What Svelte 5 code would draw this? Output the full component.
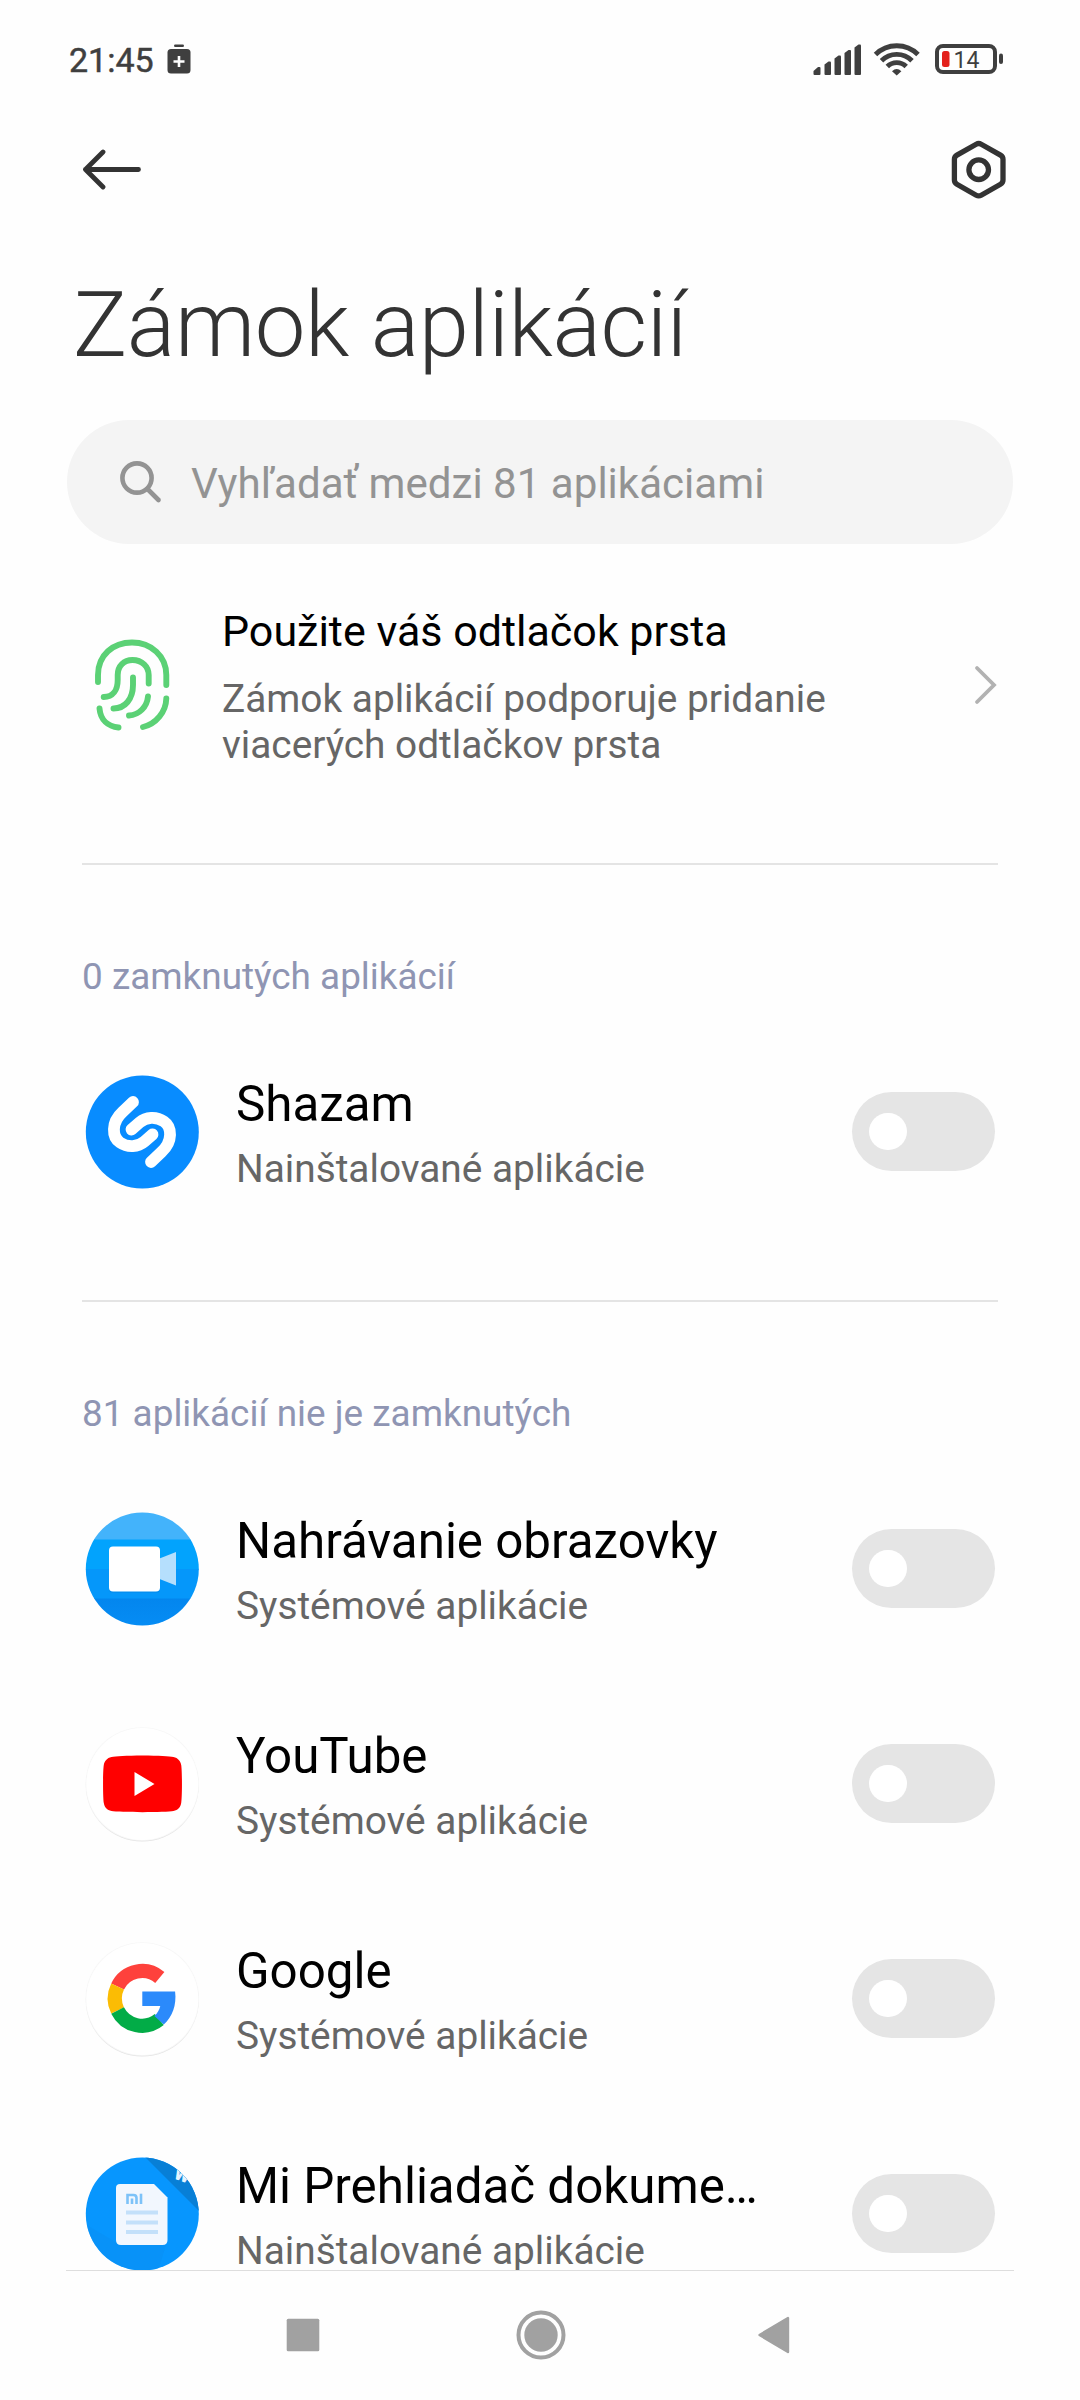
<script lang="ts">
  type App = {
    id: string;
    name: string;
    kind: string;
    locked: boolean;
  };

  type Section = {
    label: string;
    apps: App[];
  };

  let sections = $state<Section[]>([
    {
      label: "0 zamknutých aplikácií",
      apps: [{ id: "shazam", name: "Shazam", kind: "Nainštalované aplikácie", locked: false }]
    },
    {
      label: "81 aplikácií nie je zamknutých",
      apps: [
        { id: "recorder", name: "Nahrávanie obrazovky", kind: "Systémové aplikácie", locked: false },
        { id: "youtube", name: "YouTube", kind: "Systémové aplikácie", locked: false },
        { id: "google", name: "Google", kind: "Systémové aplikácie", locked: false },
        { id: "docs", name: "Mi Prehliadač dokume…", kind: "Nainštalované aplikácie", locked: false }
      ]
    }
  ]);
</script>

{#snippet appIcon(id: string)}
  <svg class="app-icon" viewBox="0 0 120 120" aria-hidden="true">
    {#if id === "shazam"}
      <circle cx="60.3" cy="60" r="56.5" fill="#088cff" />
      <g fill="none" stroke="#fff" stroke-width="11.8" stroke-linecap="round">
        <path d="M51 30 L40.500 40 C29 50.500 30 65 38 70.500 C46 76 56 75 62.500 69.500 L70.500 62.500" />
        <path d="M69 90 L79.500 80 C91 69.500 90 55 82 49.500 C74 44 64 45 57.500 50.500 L49.500 57.500" />
      </g>
    {:else if id === "recorder"}
      <defs>
        <clipPath id="rec-clip"><circle cx="60.3" cy="60" r="56.5" /></clipPath>
        <linearGradient id="rec-low" x1="0" y1="0" x2="0" y2="1">
          <stop offset="0" stop-color="#0386ee" />
          <stop offset="1" stop-color="#068df5" />
        </linearGradient>
      </defs>
      <g clip-path="url(#rec-clip)">
        <rect width="120" height="31" fill="#43b3fb" />
        <rect y="30.500" width="120" height="30" fill="#02a3fd" />
        <rect y="60" width="120" height="30" fill="#0597fa" />
        <rect y="89.500" width="120" height="31" fill="url(#rec-low)" />
      </g>
      <rect x="27" y="39" width="51" height="45" rx="4" fill="#0374d4" opacity="0.25" />
      <path d="M77.500 49.500 L94 43 V76.500 L77.500 70 Z" fill="#b5dffd" />
      <rect x="27" y="37.500" width="51" height="45" rx="4" fill="#fff" />
    {:else if id === "youtube"}
      <circle cx="60.3" cy="61" r="56.5" fill="#e4e4e4" />
      <circle cx="60.3" cy="60" r="56.8" fill="#f7f7f7" />
      <circle cx="60.3" cy="60" r="56" fill="#fff" />
      <path
        d="M60.500 31.500 C76.500 31.500 87.500 32.300 91.500 33 C96 34 98.500 37 99.200 41 C100.200 47 100.200 73 99.200 79 C98.500 83.500 96 86 91.500 87 C84.500 88.500 36.500 88.500 29.500 87 C25 86 22.500 83.500 21.800 79 C20.800 73 20.800 47 21.800 41 C22.500 37 25 34 29.500 33 C33.500 32.300 44.500 31.500 60.500 31.500 Z"
        fill="#f00"
      />
      <path d="M52.500 48 L72.500 60 L52.500 72 Z" fill="#fff" />
    {:else if id === "google"}
      <circle cx="60.3" cy="61" r="56.5" fill="#e4e4e4" />
      <circle cx="60.3" cy="60" r="56.8" fill="#f7f7f7" />
      <circle cx="60.3" cy="60" r="56" fill="#fff" />
      <g fill="none" stroke-width="14.200">
        <path d="M77.800 38.500 A27.300 27.300 0 0 0 35.600 47.500" stroke="#fe413c" />
        <path d="M35.600 47.500 A27.300 27.300 0 0 0 35.600 71.500" stroke="#fbbc04" />
        <path d="M35.600 71.500 A27.300 27.300 0 0 0 77.300 80.600" stroke="#02ac47" />
      </g>
      <path d="M60.300 52.500 H93.100 C94.800 66 90.300 78 81.800 85.500 L72.300 77 C75.300 74.500 77.300 71 78.300 67 H60.300 Z" fill="#2b8afb" />
    {:else}
      <defs>
        <clipPath id="doc-clip"><circle cx="60.3" cy="60" r="56.5" /></clipPath>
      </defs>
      <g clip-path="url(#doc-clip)">
        <rect width="120" height="120" fill="#0796fe" />
        <path d="M33.500 88 L3 70 V120 H75 L84 91 Z" fill="#0a8ff3" opacity="0.6" />
        <path d="M60 0 L120 60 V0 Z" fill="#087fd6" />
        <text class="wps" x="91" y="25" transform="rotate(20 93 25)">W</text>
      </g>
      <path d="M38 30 H72 L85.500 43.500 V86 Q85.500 91 80.500 91 H39 Q34 91 34 86 V34 Q34 30 38 30 Z" fill="#f2f7fe" />
      <g fill="none" stroke="#7dc2f8" stroke-width="2.600">
        <path d="M45.500 50 V41 H51.500 Q54.500 41 54.500 44 V50" />
        <path d="M50 44.500 V50" />
        <path d="M59 39.700 V50" />
      </g>
      <path d="M44 58.500 H76 M44 68.500 H76 M44 78 H76" stroke="#c3e0fa" stroke-width="3.800" />
    {/if}
  </svg>
{/snippet}

<div class="screen">
  <div class="status-bar">
    <span class="clock">21:45</span>
    <svg class="saver" width="24" height="30" viewBox="0 0 24 30" aria-hidden="true">
      <rect x="7" y="0.500" width="10" height="2.600" rx="1.300" fill="#3f3f3f" />
      <rect x="0.500" y="5" width="23" height="24.500" rx="3.500" fill="#3f3f3f" />
      <path d="M12 12 V23 M6.500 17.500 H17.500" stroke="#fff" stroke-width="2.600" />
    </svg>
    <svg class="indicators" width="192" height="36" viewBox="812 41 192 36" aria-hidden="true">
      <g fill="#3f3f3f">
        <path d="M813.500 71 L818 67 H819.500 Q820.500 67 820.500 68 V74 Q820.500 75 819.500 75 H814.500 Q813.500 75 813.500 74 Z" />
        <path d="M824.500 64.500 L828.500 61.500 H830 Q831 61.500 831 62.500 V74 Q831 75 830 75 H825.500 Q824.500 75 824.500 74 Z" />
        <path d="M834.500 58.500 L838.500 55.500 H840 Q841 55.500 841 56.500 V74 Q841 75 840 75 H835.500 Q834.500 75 834.500 74 Z" />
        <path d="M844.500 53 L848.500 50 H850 Q851 50 851 51 V74 Q851 75 850 75 H845.500 Q844.500 75 844.500 74 Z" />
        <path d="M854.500 47.500 L858.500 44.500 H860 Q861 44.500 861 45.500 V74 Q861 75 860 75 H855.500 Q854.500 75 854.500 74 Z" />
        <path d="M896.700 75.500 L892 71.300 Q896.700 66.500 901.400 71.300 Z" />
      </g>
      <g fill="none" stroke="#3f3f3f" stroke-width="4.900">
        <path d="M875.500 54.500 A30 30 0 0 1 918 54.500" />
        <path d="M881.500 60.700 A21.500 21.500 0 0 1 912 60.700" />
        <path d="M887.300 66.500 A13.500 13.500 0 0 1 906.200 66.500" />
      </g>
      <rect x="937" y="46" width="58" height="26" rx="6" fill="none" stroke="#3f3f3f" stroke-width="4" />
      <rect x="999" y="53.500" width="4" height="10.500" rx="2" fill="#3f3f3f" />
      <rect x="942" y="51" width="7.500" height="16" rx="2.500" fill="#e3211c" />
      <text class="charge" x="953.500" y="68">14</text>
    </svg>
  </div>

  <div class="toolbar">
    <button type="button" aria-label="Späť">
      <svg width="60" height="42" viewBox="82 149 60 42" aria-hidden="true">
        <path
          d="M103 152 L85.500 169.500 L103 187 M85.500 169.500 H138.500"
          fill="none"
          stroke="#333"
          stroke-width="4.800"
          stroke-linecap="round"
          stroke-linejoin="round"
        />
      </svg>
    </button>
    <button type="button" aria-label="Nastavenia">
      <svg width="56" height="60" viewBox="951 140 56 60" aria-hidden="true">
        <g fill="none" stroke="#333" stroke-width="5.300">
          <path
            d="M976.200 144.200 Q978.700 142.800 981.200 144.200 L1000.500 155.100 Q1003 156.500 1003 159.300 V180.100 Q1003 182.900 1000.500 184.300 L981.200 195.200 Q978.700 196.600 976.200 195.200 L956.900 184.300 Q954.400 182.900 954.400 180.100 V159.300 Q954.400 156.500 956.900 155.100 Z"
          />
          <circle cx="978.700" cy="169.700" r="9.800" />
        </g>
      </svg>
    </button>
  </div>

  <h1>Zámok aplikácií</h1>

  <div class="search">
    <svg width="42" height="44" viewBox="120 460 42 44" aria-hidden="true">
      <g fill="none" stroke="#939393" stroke-width="4.600">
        <circle cx="137" cy="478" r="14.600" />
        <path d="M147.500 489 L158.500 500" stroke-linecap="round" />
      </g>
    </svg>
    <span>Vyhľadať medzi 81 aplikáciami</span>
  </div>

  <main>
    <div class="fingerprint">
      <svg class="print" width="80" height="96" viewBox="92 636 80 96" aria-hidden="true">
        <g fill="none" stroke="#5bd175" stroke-width="5.900" stroke-linecap="round">
          <path d="M98 682 V675 C98 655 113 642.500 132 642.500 C151 642.500 166.300 656 166.300 675 V685" />
          <path d="M103.700 697 C113 697 117.700 690 117.700 680 V675 C117.700 666 124 660 132.500 660 C142 660 148.700 666.500 148.700 675 V683.500" />
          <path d="M133 677.500 V685 C133 699 125 708.500 113.500 708.500" />
          <path d="M148 696.500 C147 707 139 715 129 715.500" />
          <path d="M99.500 708.500 C100.500 720 108 726.500 118.500 727.500" />
          <path d="M166.300 698.500 C166 712 156 724 143 727" />
        </g>
      </svg>
      <div class="fingerprint-copy">
        <div class="fingerprint-title">Použite váš odtlačok prsta</div>
        <div class="fingerprint-text">Zámok aplikácií podporuje pridanie viacerých odtlačkov prsta</div>
      </div>
      <svg class="chevron" width="24" height="42" viewBox="0 0 24 42" aria-hidden="true">
        <path d="M3 4 L20 21 L3 38" fill="none" stroke="#b2b2b2" stroke-width="3.800" stroke-linecap="round" />
      </svg>
    </div>

    {#each sections as section}
      <section>
        <h2>{section.label}</h2>
        {#each section.apps as app (app.id)}
          <div class="app-row">
            {@render appIcon(app.id)}
            <div class="app-copy">
              <div class="app-name">{app.name}</div>
              <div class="app-kind">{app.kind}</div>
            </div>
            <button
              class="toggle"
              class:on={app.locked}
              type="button"
              role="switch"
              aria-checked={app.locked}
              aria-label={app.name}
              onclick={() => (app.locked = !app.locked)}
            >
              <span class="knob"></span>
            </button>
          </div>
        {/each}
      </section>
    {/each}
  </main>

  <nav>
    <svg width="34" height="34" viewBox="0 0 34 34" aria-hidden="true">
      <rect x="0.700" y="0.700" width="32.600" height="32.600" rx="1.500" fill="#a1a1a1" />
    </svg>
    <svg class="home" width="50" height="50" viewBox="0 0 50 50" aria-hidden="true">
      <circle cx="25" cy="25" r="22.500" fill="none" stroke="#a1a1a1" stroke-width="4" />
      <circle cx="25" cy="25" r="16.700" fill="#a1a1a1" />
    </svg>
    <svg width="34" height="40" viewBox="0 0 34 40" aria-hidden="true">
      <path d="M2.500 20 L31 3 V37 Z" fill="#a1a1a1" stroke="#a1a1a1" stroke-width="2.400" stroke-linejoin="round" />
    </svg>
  </nav>
</div>

<style>
  :global(body) {
    background: #fefefe;
  }

  .screen {
    box-sizing: border-box;
    width: 1080px;
    height: 2400px;
    display: flex;
    flex-direction: column;
    overflow: hidden;
    background: #fefefe;
    color: #000;
    font-family: Roboto, "Noto Sans", sans-serif;
  }

  .screen svg {
    display: block;
    flex: none;
  }

  button {
    padding: 0;
    border: 0;
    background: none;
    cursor: pointer;
  }

  .status-bar {
    height: 118px;
    display: flex;
    align-items: center;
    padding: 0 76px 0 69px;
    flex: none;
  }

  .clock {
    width: 86px;
    font-size: 34px;
    font-weight: 450;
    line-height: 40px;
    color: #3f3f3f;
    padding-top: 2px;
    -webkit-text-stroke: 0.5px #3f3f3f;
  }

  .saver {
    margin-left: 12px;
  }

  .indicators {
    margin-left: auto;
  }

  .charge {
    font-size: 23px;
    fill: #3f3f3f;
  }

  .toolbar {
    height: 104px;
    display: flex;
    align-items: center;
    justify-content: space-between;
    padding: 0 73px 0 82px;
    flex: none;
  }

  h1 {
    margin: 43px 0 0 73px;
    font-size: 90.5px;
    font-weight: 300;
    line-height: 120px;
    letter-spacing: -0.4px;
    color: #333;
    flex: none;
  }

  .search {
    box-sizing: border-box;
    height: 124px;
    margin: 35px 67px 0;
    padding: 0 53px;
    display: flex;
    align-items: center;
    gap: 29px;
    border-radius: 62px;
    background: #f4f4f4;
    font-size: 42.1px;
    color: #939393;
    flex: none;
  }

  .search span {
    padding-top: 2px;
  }

  main {
    flex: 1;
    min-height: 0;
    overflow: hidden;
    padding: 0 82px;
  }

  .fingerprint {
    height: 319px;
    display: flex;
    align-items: flex-start;
  }

  .print {
    margin: 92px 0 0 10px;
  }

  .fingerprint-copy {
    width: 640px;
    margin: 59px 0 0 50px;
  }

  .fingerprint-title {
    font-size: 43px;
    line-height: 56px;
  }

  .fingerprint-text {
    margin-top: 17px;
    font-size: 38.8px;
    line-height: 46px;
    color: #666;
  }

  .chevron {
    margin: 120px 0 0 auto;
  }

  section {
    border-top: 2px solid #e4e4e4;
    padding-bottom: 61px;
  }

  h2 {
    height: 42px;
    margin: 0;
    padding: 91px 0 26px;
    font-size: 36.9px;
    font-weight: 400;
    line-height: 42px;
    color: #8f95b3;
  }

  .app-row {
    height: 215px;
    display: flex;
    align-items: center;
  }

  .app-icon {
    width: 120px;
    height: 120px;
  }

  .app-copy {
    margin-left: 34px;
    padding-top: 9px;
  }

  .app-name {
    font-size: 49.3px;
    line-height: 64px;
    white-space: nowrap;
  }

  .app-kind {
    font-size: 38.8px;
    line-height: 65px;
    color: #666;
  }

  .toggle {
    box-sizing: border-box;
    width: 143px;
    height: 79px;
    margin: 0 3px 0 auto;
    padding: 0 17px;
    display: flex;
    align-items: center;
    border-radius: 40px;
    background: #e5e5e5;
  }

  .toggle.on {
    justify-content: flex-end;
    background: #0d84ff;
  }

  .knob {
    width: 37.5px;
    height: 37.5px;
    border-radius: 50%;
    background: #fff;
  }

  nav {
    box-sizing: border-box;
    height: 130px;
    margin: 0 66px;
    padding: 0 223px 1px 220px;
    display: flex;
    align-items: center;
    justify-content: space-between;
    border-top: 1px solid #dedede;
    flex: none;
  }

  .home {
    margin-left: 4px;
  }

  .wps {
    font-size: 18px;
    font-weight: 900;
    fill: #e6f4ff;
  }
</style>
